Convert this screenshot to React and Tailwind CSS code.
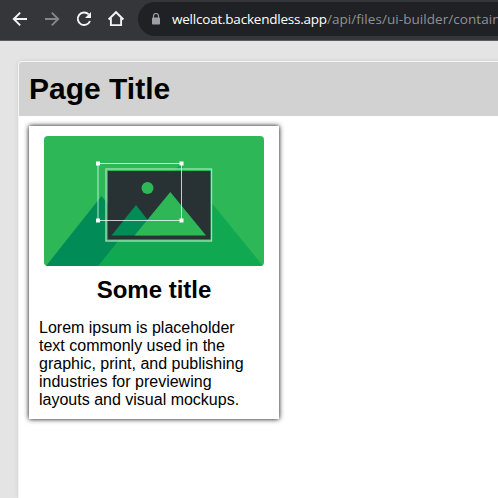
function BrowserBar() {
  return (
    <header className="flex h-[41px] shrink-0 items-start border-b border-[#5c5b5f] bg-[#35363a] pl-[10px] pt-[2px]">
      <nav className="flex h-[34px] shrink-0 items-center gap-3">
        <svg className="size-5" viewBox="0 0 20 20" fill="none" stroke="#f1f3f4" strokeWidth="1.9">
          <path d="M17 10H4M10.2 3.6L3.8 10l6.4 6.4" />
        </svg>
        <svg className="size-5" viewBox="0 0 20 20" fill="none" stroke="#85868a" strokeWidth="1.9">
          <path d="M3 10h13M9.8 3.6l6.4 6.4-6.4 6.4" />
        </svg>
        <svg className="size-5" viewBox="0 0 20 20" fill="none">
          <path d="M14.7 5.4A6.3 6.3 0 1 0 16 12" stroke="#f1f3f4" strokeWidth="1.9" />
          <path d="M17 3v6h-6z" fill="#f1f3f4" />
        </svg>
        <svg className="size-5" viewBox="0 0 20 20" fill="none" stroke="#f1f3f4" strokeWidth="1.9">
          <path d="M2.6 10.5L10 3.2l7.4 7.3M4.9 9v7.1h10.2V9" />
        </svg>
      </nav>
      <div className="ml-3 flex h-[34px] min-w-0 flex-1 items-center rounded-l-full bg-[#202124] pl-[13px]">
        <svg className="h-3 w-[10px] shrink-0" viewBox="0 0 10 12" fill="none">
          <path d="M2.5 5V3a2.5 2.5 0 0 1 5 0v2" stroke="#9aa0a6" strokeWidth="1.2" />
          <rect x="1" y="4.5" width="8" height="7" rx="0.8" fill="#9aa0a6" />
        </svg>
        <p className="ml-[11px] whitespace-nowrap font-['Open_Sans',sans-serif] text-[13.5px] leading-[18px] tracking-[0.06px] text-[#8f9296]">
          <span className="tracking-[-0.22px] text-white">wellcoat.backendless.app</span>/api/files/ui-builder/contain
        </p>
      </div>
    </header>
  );
}

function Illustration() {
  return (
    <svg className="h-[130px] w-[220px] rounded" viewBox="0 0 220 130">
      <rect width="220" height="130" fill="#2eb757" />
      <path d="M2 130L57.5 60L113 130z" fill="#008b57" />
      <path d="M54 130L136 28L219 130z" fill="#10a851" />
      <rect x="62" y="33" width="105.5" height="72" fill="#2eb757" fillOpacity="0.6" stroke="#a5e0b8" strokeWidth="1.3" />
      <rect x="63.8" y="35" width="102.7" height="68.3" fill="#283234" />
      <circle cx="103.5" cy="52" r="6" fill="#2eb757" />
      <path d="M67.5 99.5L92 69L116 99.5z" fill="#008b57" />
      <path d="M90.5 99.5L126.3 56L162 99.5z" fill="#2eb757" />
      <rect x="54" y="27.5" width="83.5" height="57" fill="none" stroke="#fff" strokeOpacity="0.75" />
      <g fill="#fff">
        <rect x="52" y="25.5" width="4" height="4" />
        <rect x="135.5" y="25.5" width="4" height="4" />
        <rect x="52" y="82.5" width="4" height="4" />
        <rect x="135.5" y="82.5" width="4" height="4" />
      </g>
    </svg>
  );
}

export default function App() {
  return (
    <div className="flex h-[498px] w-[498px] flex-col overflow-hidden bg-[#e4e4e4] font-['Liberation_Sans',Arial,sans-serif] text-black">
      <BrowserBar />
      <main className="ml-[18px] mt-5 w-[500px] flex-1 rounded-tl border-l border-t border-[#f5f5f5] bg-white shadow-[0_0_4px_rgba(0,0,0,0.1)]">
        <h1 className="flex h-[54px] items-center rounded-tl-[3px] bg-[#d2d2d2] pb-px pl-[10px] text-[30px] font-bold leading-9">
          Page Title
        </h1>
        <article className="ml-[10px] mt-[10px] flex h-[293px] w-[250px] flex-col items-center bg-white p-[10px] shadow-[0_0_5px_#000]">
          <Illustration />
          <h2 className="mt-[10px] text-2xl font-bold leading-7">Some title</h2>
          <p className="mt-[15px] w-full whitespace-nowrap text-base leading-[18px]">
            Lorem ipsum is placeholder<br />
            text commonly used in the<br />
            graphic, print, and publishing<br />
            industries for previewing<br />
            layouts and visual mockups.
          </p>
        </article>
      </main>
    </div>
  );
}
